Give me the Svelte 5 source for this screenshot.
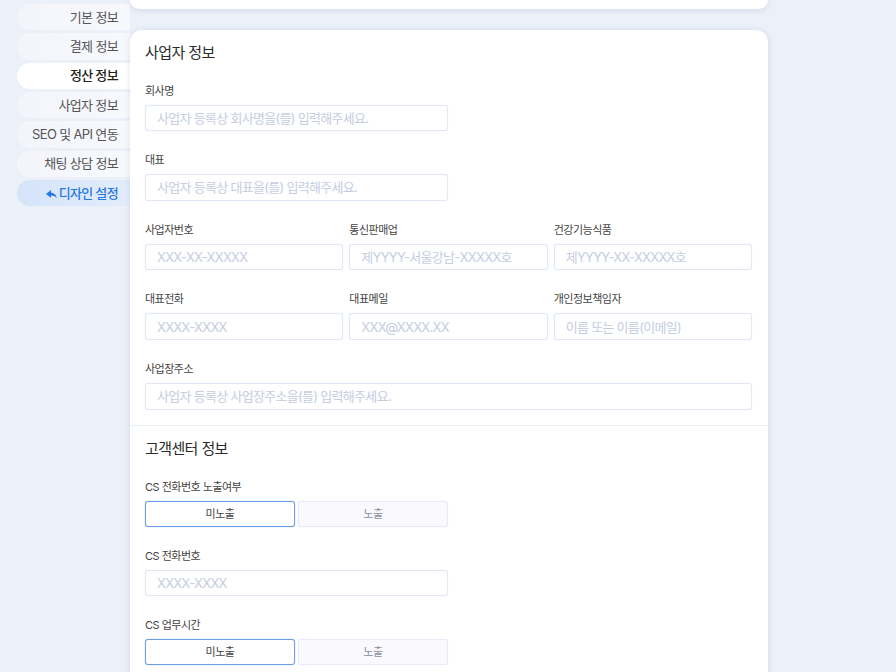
<script>
  const tabs = [
    { label: '기본 정보' },
    { label: '결제 정보' },
    { label: '정산 정보', active: true },
    { label: '사업자 정보' },
    { label: 'SEO 및 API 연동' },
    { label: '채팅 상담 정보' },
    { label: '디자인 설정', back: true }
  ];
  const ph = {
    company: '사업자 등록상 회사명을(를) 입력해주세요.',
    ceo: '사업자 등록상 대표을(를) 입력해주세요.',
    address: '사업자 등록상 사업장주소을(를) 입력해주세요.'
  };
  const row1 = [
    { label: '사업자번호', ph: 'XXX-XX-XXXXX' },
    { label: '통신판매업', ph: '제YYYY-서울강남-XXXXX호' },
    { label: '건강기능식품', ph: '제YYYY-XX-XXXXX호' }
  ];
  const row2 = [
    { label: '대표전화', ph: 'XXXX-XXXX' },
    { label: '대표메일', ph: 'XXX@XXXX.XX' },
    { label: '개인정보책임자', ph: '이름 또는 이름(이메일)' }
  ];
</script>

<div class="page">
  <nav class="side">
    {#each tabs as tab}
      <button class="tab" class:active={tab.active} class:back={tab.back}>
        {#if tab.back}
          <svg width="11" height="9" viewBox="0 0 11 9"><path d="M5 0 0 3.900l5 3.900V5.500c2.500 0 4.300.6 5.600 3C10.300 5 8.500 2.800 5 2.400z" fill="currentColor"/></svg>
        {/if}
        {tab.label}
      </button>
    {/each}
  </nav>

  <main class="content">
    <div class="card stub"></div>

    <section class="card form">
      <div class="block">
        <h2>사업자 정보</h2>
        <div class="field half">
          <label for="company">회사명</label>
          <input id="company" placeholder={ph.company} />
        </div>
        <div class="field half">
          <label for="ceo">대표</label>
          <input id="ceo" placeholder={ph.ceo} />
        </div>
        <div class="row">
          {#each row1 as f}
            <div class="field">
              <label for={f.label}>{f.label}</label>
              <input id={f.label} placeholder={f.ph} />
            </div>
          {/each}
        </div>
        <div class="row">
          {#each row2 as f}
            <div class="field">
              <label for={f.label}>{f.label}</label>
              <input id={f.label} placeholder={f.ph} />
            </div>
          {/each}
        </div>
        <div class="field">
          <label for="address">사업장주소</label>
          <input id="address" placeholder={ph.address} />
        </div>
      </div>

      <div class="block second">
        <h2>고객센터 정보</h2>
        <div class="field half">
          <span class="label">CS 전화번호 노출여부</span>
          <div class="toggle">
            <button class="on">미노출</button>
            <button>노출</button>
          </div>
        </div>
        <div class="field half">
          <label for="cs-tel">CS 전화번호</label>
          <input id="cs-tel" placeholder="XXXX-XXXX" />
        </div>
        <div class="field half">
          <span class="label">CS 업무시간</span>
          <div class="toggle">
            <button class="on">미노출</button>
            <button>노출</button>
          </div>
        </div>
      </div>
    </section>
  </main>
</div>

<style>
  :global(body) {
    background: #ebf0f9;
    overflow: hidden;
  }
  .page {
    display: flex;
    align-items: flex-start;
    height: 672px;
    overflow: hidden;
    font-family: Inter, "Noto Sans CJK KR", sans-serif;
    color: #333;
  }
  .side {
    width: 113px;
    margin-left: 17px;
    padding-top: 4px;
    display: flex;
    flex-direction: column;
    gap: 3px;
    flex: none;
  }
  .tab {
    height: 26.33px;
    border: 0;
    border-radius: 13px 0 0 13px;
    padding: 0 12px 2px 0;
    background: linear-gradient(90deg, #f3f5fb, #f8f9fd);
    font: inherit;
    font-size: 13px;
    letter-spacing: -0.65px;
    color: #555;
    text-align: right;
  }
  .tab.active {
    background: #fff;
    color: #222;
    font-weight: 500;
  }
  .tab.back {
    background: linear-gradient(90deg, #d5e4fa, #e2ecfb);
    color: #2a78e4;
    font-weight: 500;
  }
  .tab svg {
    margin-right: -1px;
    vertical-align: -1px;
  }
  .content {
    width: 638px;
    flex: none;
    display: flex;
    flex-direction: column;
    gap: 21px;
  }
  .card {
    background: #fff;
    box-shadow: 0 1px 6px rgba(120, 135, 170, 0.22);
  }
  .stub {
    height: 9px;
    border-radius: 0 0 12px 12px;
  }
  .form {
    border-radius: 12px 12px 0 0;
  }
  .block {
    padding: 15px 16px 15px 15px;
    display: flex;
    flex-direction: column;
    gap: 22px;
  }
  .second {
    border-top: 1px solid #e8edf6;
    gap: 21.33px;
  }
  .second h2 {
    margin-bottom: 1.5px;
  }
  h2 {
    margin: 0 0 0.5px;
    font-size: 15px;
    font-weight: 400;
    letter-spacing: -0.6px;
    line-height: 16px;
    color: #2b2b2b;
  }
  .row {
    display: grid;
    grid-template-columns: repeat(3, 1fr);
    gap: 6px;
  }
  .field {
    display: flex;
    flex-direction: column;
    gap: 6px;
  }
  .half {
    width: 303px;
  }
  label, .label {
    font-size: 11px;
    letter-spacing: -0.5px;
    line-height: 15px;
    color: #444;
  }
  input {
    box-sizing: border-box;
    width: 100%;
    height: 26.67px;
    padding: 0 11px;
    border: 1px solid #e2e8f3;
    border-radius: 3px;
    background: #fff;
    box-shadow: 0 0 1px #dfe6f2;
    font: inherit;
    font-size: 13px;
    letter-spacing: -0.7px;
    outline: none;
  }
  input::placeholder {
    color: #c5cddf;
    opacity: 1;
  }
  .toggle {
    display: grid;
    grid-template-columns: 1fr 1fr;
    gap: 3px;
  }
  .toggle button {
    height: 26.67px;
    padding: 0 0 2px;
    border: 1px solid #e6ebf5;
    border-radius: 3px;
    background: #fafafe;
    box-shadow: 0 0 1px #e2e8f3;
    font: inherit;
    font-size: 11px;
    letter-spacing: -0.4px;
    color: #8a8f9c;
  }
  .toggle button.on {
    background: #fff;
    border-color: #6d9fe8;
    box-shadow: 0 0 1px #6d9fe8;
    color: #444;
  }
</style>
